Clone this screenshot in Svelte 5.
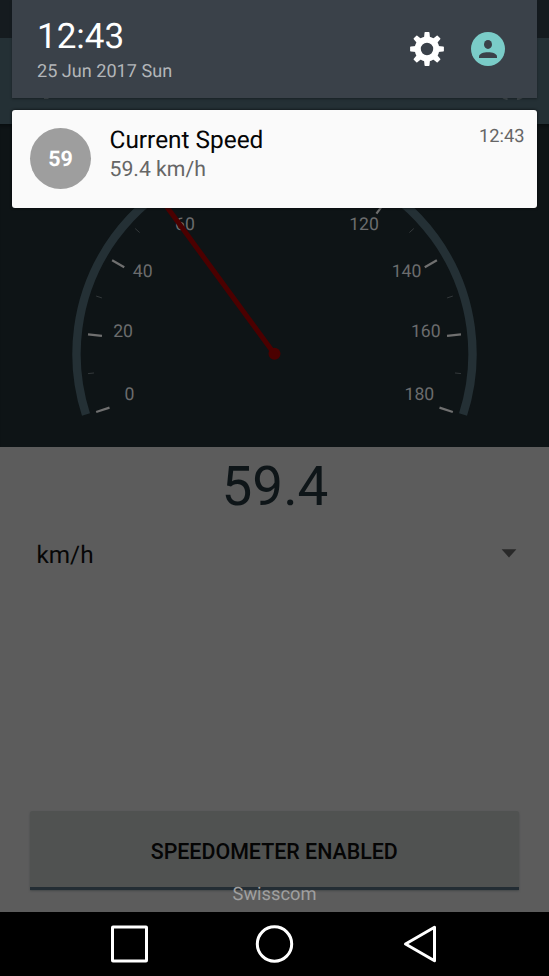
<script>
  const cx = 274.5;
  const cy = 354;
  const point = (deg, r) => {
    const a = (deg * Math.PI) / 180;
    return [cx - r * Math.cos(a), cy - r * Math.sin(a)];
  };
  const tick = (deg, outer, inner) => {
    const [x1, y1] = point(deg, outer);
    const [x2, y2] = point(deg, inner);
    return { x1, y1, x2, y2 };
  };
  // The scale spans 216 degrees: 24 degrees for every 20 km/h.
  const major = Array.from({ length: 10 }, (_, i) => tick(-18 + 24 * i, 187.5, 173.5));
  const minor = Array.from({ length: 9 }, (_, i) => tick(-6 + 24 * i, 187.5, 181.5));
  const labels = [
    ['0', 129.4, 400.5], ['20', 123.1, 337.6], ['40', 142.7, 277.7], ['60', 185, 230.5],
    ['120', 364, 230.5], ['140', 406.5, 277.7], ['160', 425.8, 337.6], ['180', 419.4, 400.5],
  ];
  const [ax, ay] = point(-17.8, 198);
  const [bx, by] = point(197.8, 198);
  const [nx, ny] = point(53.8, 187);
  const teeth = [0, 45, 90, 135, 180, 225, 270, 315];
</script>

<div class="screen">
  <div class="status"></div>
  <header class="toolbar">
    <svg width="549" height="3" viewBox="0 97 549 3" fill="#50575a">
      <path d="M44 96H48.5V99H44ZM501 97Q504 100 507.5 99.8V97ZM517 97V99.8Q521.5 99.8 523.5 97Z" />
    </svg>
  </header>
  <section class="gauge">
    <svg width="549" height="323" viewBox="0 124 549 323">
      <path class="arc" d="M{ax} {ay}A198 198 0 1 1 {bx} {by}" />
      {#each minor as t}<line class="minor" {...t} />{/each}
      {#each major as t}<line class="major" {...t} />{/each}
      {#each labels as [text, x, y]}<text {x} y={y - 0.5}>{text}</text>{/each}
      <line class="needle" x1={cx} y1={cy} x2={nx} y2={ny} />
      <circle cx={cx} cy={cy - 0.2} r="6" fill="#4b0000" />
    </svg>
  </section>
  <main>
    <div class="speed">59.4</div>
    <div class="unit">
      <span>km/h</span>
      <svg width="16" height="9" viewBox="0 0 16 9"><path d="M.6 .2H15.4L8 8.6Z" fill="#292929" /></svg>
    </div>
    <button>SPEEDOMETER ENABLED</button>
  </main>
  <nav>
    <svg width="549" height="64" viewBox="0 912 549 64" fill="none" stroke="#fff" stroke-width="3">
      <rect x="112.5" y="927" width="34" height="34" rx=".5" />
      <circle cx="274.5" cy="944" r="17.2" />
      <path d="M405.5 944L434.5 927.2V960.8Z" stroke-linejoin="round" />
    </svg>
  </nav>

  <div class="carrier">Swisscom</div>
  <div class="shade">
    <div class="head">
      <div class="clock">
        <div class="time">12:43</div>
        <div class="date">25 Jun 2017 Sun</div>
      </div>
      <svg width="34" height="34" viewBox="-17 -17 34 34">
        <circle r="9.3" fill="none" stroke="#fff" stroke-width="6.2" />
        {#each teeth as a}
          <path d="M-3 -11L-2.5 -16.2Q-2.4 -16.9 -1.8 -16.9H1.8Q2.4 -16.9 2.5 -16.2L3 -11Z" fill="#fff" transform="rotate({a})" />
        {/each}
      </svg>
      <svg class="user" width="34" height="34" viewBox="-17 -17 34 34">
        <circle r="17" fill="#7accc8" />
        <ellipse cy="-4.6" rx="4" ry="4.5" fill="#3a4149" />
        <path d="M-9 9V7.6C-9 4.6 -4.5 3.2 0 3.2S9 4.6 9 7.6V9Z" fill="#3a4149" />
      </svg>
    </div>
    <article>
      <div class="badge">59</div>
      <div class="message">
        <div class="title">Current Speed</div>
        <div class="detail">59.4 km/h</div>
      </div>
      <div class="when">12:43</div>
    </article>
  </div>
</div>

<style>
  .screen {
    position: relative;
    display: flex;
    flex-direction: column;
    width: 549px;
    height: 976px;
    overflow: hidden;
    background: #5c5c5c;
    font-family: Roboto, sans-serif;
    text-rendering: geometricPrecision;
  }
  svg { display: block; flex: none; }
  .status { height: 38px; flex: none; background: #151b1f; }
  .toolbar { height: 86px; flex: none; box-sizing: border-box; padding-top: 59px; background: #243035; }
  .gauge { height: 322.5px; flex: none; overflow: hidden; background: #0e1416; box-shadow: inset 0 4px 3px -2px #0a0e10; }
  .arc { fill: none; stroke: #243035; stroke-width: 8.4; }
  .major { stroke: #707070; stroke-width: 2.2; }
  .minor { stroke: #34393b; stroke-width: 1; }
  .needle { stroke: #4b0000; stroke-width: 5; }
  text { font-size: 17.6px; fill: #6b6c6d; text-anchor: middle; }
  main { flex: 1; display: flex; flex-direction: column; }
  .speed { margin-top: 10.5px; height: 60px; line-height: 60px; font-size: 54.8px; text-align: center; color: #0e1518; padding-left: 1px; }
  .unit {
    display: flex;
    align-items: center;
    justify-content: space-between;
    height: 40px;
    margin-top: 18px;
    padding: 0 32px 0 36.5px;
    font-size: 24.3px;
    line-height: 40px;
    color: #070707;
  }
  .unit svg { margin-top: -3px; }
  button {
    margin: 236px 30.5px 0 30px;
    height: 78.5px;
    padding: 5px 0 0;
    box-sizing: border-box;
    border: 0;
    border-bottom: 3px solid #232d34;
    border-radius: 3px 3px 0 0;
    background: #505251;
    color: #050505;
    font: 500 21.4px/71px Roboto, sans-serif;
    box-shadow: 0 1px 2px #45484a;
  }
  nav { height: 64px; flex: none; background: #000; }
  .carrier {
    position: absolute;
    top: 883px;
    left: 0;
    width: 549px;
    text-align: center;
    font-size: 18.3px;
    line-height: 24px;
    color: #a0a0a0;
  }
  .shade { position: absolute; top: 0; left: 12px; width: 525px; }
  .head {
    display: flex;
    align-items: center;
    height: 98px;
    padding: 0 32px 0 25px;
    box-sizing: border-box;
    background: #3a4149;
    box-shadow: 0 1px 2px #10171a99;
  }
  .clock { flex: 1; }
  .time { height: 42px; margin-top: 1px; font-size: 35px; line-height: 42px; color: #fff; }
  .date { height: 24px; margin-top: 2px; font-size: 18.1px; line-height: 24px; color: #b3b6b9; }
  .user { margin-left: 27px; }
  article {
    display: flex;
    height: 98px;
    margin-top: 12px;
    padding: 0 12.5px 0 18px;
    box-sizing: border-box;
    border-radius: 3px;
    background: #fafafa;
    box-shadow: 0 0 3px #050809;
  }
  .badge {
    width: 61px;
    height: 61px;
    margin-top: 18px;
    border-radius: 50%;
    background: #9e9e9e;
    color: #fff;
    font-size: 21.5px;
    font-weight: 700;
    line-height: 63px;
    text-align: center;
  }
  .message { flex: 1; margin-left: 18.5px; padding-top: 15px; }
  .title { font-size: 24.4px; line-height: 30px; color: #050505; }
  .detail { font-size: 21.2px; line-height: 30px; color: #666; }
  .when { padding-top: 15px; font-size: 18.3px; line-height: 24px; color: #666; }
</style>
